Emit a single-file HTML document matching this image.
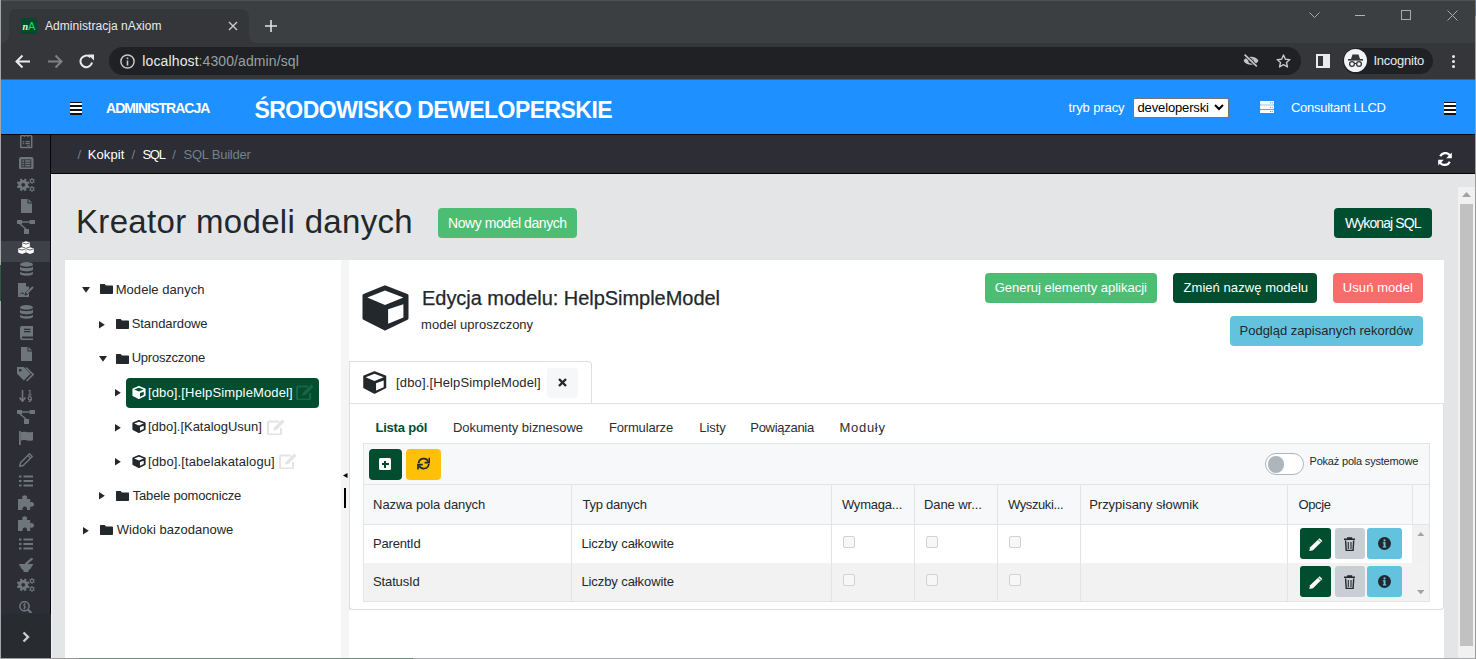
<!DOCTYPE html>
<html><head><meta charset="utf-8"><style>
*{margin:0;padding:0;box-sizing:border-box}
html,body{width:1476px;height:659px;overflow:hidden;background:#e4e5e6;font-family:"Liberation Sans",sans-serif}
body>div,body>svg{position:absolute}
.t{position:absolute;white-space:nowrap}
</style></head><body>
<div style="left:0px;top:0px;width:1476px;height:43px;background:#3c3f42;"></div>
<div style="left:0px;top:0px;width:1476px;height:1px;background:#4f5153;"></div>
<div style="left:9px;top:9px;width:239.5px;height:34px;background:#35363a;border-radius:8px 8px 0 0"></div>
<div style="left:1px;top:35px;width:8px;height:8px;background:#35363a;"></div>
<div style="left:1px;top:27px;width:8px;height:16px;background:#3c3f42;border-radius:0 0 8px 0"></div>
<div style="left:248.5px;top:35px;width:8px;height:8px;background:#35363a;"></div>
<div style="left:248.5px;top:27px;width:8px;height:16px;background:#3c3f42;border-radius:0 0 0 8px"></div>
<div style="left:21px;top:18px;width:16px;height:16px;background:#05492d;border-radius:2px"></div>
<div class="t" style="left:22.5px;top:18px;font:italic bold 10px/17px 'Liberation Serif',serif;color:#f0f0f0;letter-spacing:-0.8px">n</div>
<div class="t" style="left:28px;top:17.5px;font:normal 11px/17px 'Liberation Sans',sans-serif;color:#1fdc6a">A</div>
<div class="t" style="left:45.00px;top:19px;font-size:12px;line-height:14px;color:#e8eaed;font-weight:400;letter-spacing:0.053px;">Administracja nAxiom</div>
<svg style="position:absolute;left:228px;top:21px;" width="10" height="10" viewBox="0 0 10 10"><path d="M1 1L9 9M9 1L1 9" stroke="#c9cbcf" stroke-width="1.4"/></svg>
<svg style="position:absolute;left:265px;top:20px;" width="12" height="12" viewBox="0 0 12 12"><path d="M6 0V12M0 6H12" stroke="#e0e2e5" stroke-width="1.6"/></svg>
<svg style="position:absolute;left:1309px;top:12px;" width="11" height="7" viewBox="0 0 11 7"><path d="M0.5 0.5L5.5 5.5L10.5 0.5" stroke="#a9abad" fill="none" stroke-width="1"/></svg>
<div style="left:1355px;top:15px;width:10px;height:1px;background:#b0b2b4;"></div>
<div style="left:1401px;top:10px;width:10px;height:10px;background:transparent;border:1px solid #a9abad"></div>
<svg style="position:absolute;left:1447px;top:10px;" width="11" height="11" viewBox="0 0 11 11"><path d="M0.5 0.5L10.5 10.5M10.5 0.5L0.5 10.5" stroke="#a9abad" stroke-width="1"/></svg>
<div style="left:0px;top:43px;width:1476px;height:36px;background:#35363a;"></div>
<svg style="position:absolute;left:15px;top:54px;" width="16" height="15" viewBox="0 0 16 15"><path d="M15 7.5H2M7.5 1.5L1.5 7.5L7.5 13.5" stroke="#e8eaed" stroke-width="2" fill="none"/></svg>
<svg style="position:absolute;left:47px;top:54px;" width="16" height="15" viewBox="0 0 16 15"><path d="M1 7.5H14M8.5 1.5L14.5 7.5L8.5 13.5" stroke="#7f8184" stroke-width="2" fill="none"/></svg>
<svg style="position:absolute;left:79px;top:54px;" width="16" height="15" viewBox="0 0 16 15"><path d="M13 8.5A5.8 5.8 0 1 1 11.3 3.2" stroke="#e8eaed" stroke-width="2" fill="none"/><path d="M9 0.5H15V6.5Z" fill="#e8eaed"/></svg>
<div style="left:109px;top:47px;width:1192px;height:28px;background:#202124;border-radius:14px"></div>
<svg style="position:absolute;left:120px;top:54px;" width="15" height="15" viewBox="0 0 15 15"><circle cx="7.5" cy="7.5" r="6.6" stroke="#c5c7ca" stroke-width="1.5" fill="none"/><rect x="6.7" y="6.5" width="1.6" height="5" fill="#c5c7ca"/><rect x="6.7" y="3.5" width="1.6" height="1.7" fill="#c5c7ca"/></svg>
<div class="t" style="left:142.30px;top:53px;font-size:14px;line-height:16px;color:#e8eaed;font-weight:400;letter-spacing:0.125px;">localhost</div>
<div class="t" style="left:198.50px;top:53px;font-size:14px;line-height:16px;color:#9aa0a6;font-weight:400;letter-spacing:0.107px;">:4300/admin/sql</div>
<svg style="position:absolute;left:1243px;top:54px;" width="16" height="13" viewBox="0 0 16 13"><path d="M0.6 6.8C2.8 1.4 13.2 1.4 15.4 6.8C13.2 12.2 2.8 12.2 0.6 6.8Z" fill="#c4c7c5"/><circle cx="8" cy="6.8" r="2.6" fill="#202124"/><circle cx="8.6" cy="6.2" r="1.6" fill="#c4c7c5"/><path d="M1.6 0.6L13.8 12.4" stroke="#202124" stroke-width="3.2"/><path d="M1.6 0.6L13.8 12.4" stroke="#c4c7c5" stroke-width="1.7"/></svg>
<svg style="position:absolute;left:1276px;top:54px;" width="15" height="14" viewBox="0 0 15 14"><path d="M7.5 1L9.4 5.2L13.9 5.6L10.5 8.6L11.5 13L7.5 10.7L3.5 13L4.5 8.6L1.1 5.6L5.6 5.2Z" stroke="#c5c7ca" stroke-width="1.4" fill="none" stroke-linejoin="round"/></svg>
<div style="left:1316px;top:54px;width:14px;height:14px;background:transparent;border:2px solid #e8eaed"></div>
<div style="left:1323px;top:54px;width:7px;height:14px;background:#e8eaed;"></div>
<div style="left:1343px;top:48px;width:90px;height:26px;background:#202124;border-radius:13px"></div>
<div style="left:1344px;top:49px;width:23px;height:23px;border-radius:50%;background:#f1f3f4"></div>
<svg style="position:absolute;left:1347px;top:53px;" width="17" height="15" viewBox="0 0 17 15"><path d="M4 6L5.5 1.5H11.5L13 6Z" fill="#35363a"/><rect x="1" y="6" width="15" height="1.6" fill="#35363a"/><circle cx="5" cy="11" r="2.4" stroke="#35363a" stroke-width="1.3" fill="none"/><circle cx="12" cy="11" r="2.4" stroke="#35363a" stroke-width="1.3" fill="none"/><path d="M7.4 10.5H9.6" stroke="#35363a" stroke-width="1.2"/></svg>
<div class="t" style="left:1373.50px;top:53px;font-size:13px;line-height:15px;color:#e8eaed;font-weight:400;letter-spacing:-0.250px;">Incognito</div>
<div style="left:1451.5px;top:55.0px;width:3.4px;height:3.4px;border-radius:50%;background:#e8eaed"></div>
<div style="left:1451.5px;top:60.0px;width:3.4px;height:3.4px;border-radius:50%;background:#e8eaed"></div>
<div style="left:1451.5px;top:65.0px;width:3.4px;height:3.4px;border-radius:50%;background:#e8eaed"></div>
<div style="left:0px;top:79px;width:1476px;height:1px;background:#5c5855;"></div>
<div style="left:0px;top:80px;width:1476px;height:54px;background:#1e90ff;"></div>
<div style="left:70px;top:102px;width:12px;height:13px;background:#111;"></div>
<div style="left:70px;top:103px;width:12px;height:2px;background:#fff;"></div>
<div style="left:70px;top:107px;width:12px;height:2px;background:#fff;"></div>
<div style="left:70px;top:111px;width:12px;height:2px;background:#fff;"></div>
<div class="t" style="left:106.00px;top:100px;font-size:14px;line-height:16px;color:#fff;font-weight:700;letter-spacing:-0.958px;">ADMINISTRACJA</div>
<div class="t" style="left:254.50px;top:97px;font-size:23px;line-height:26px;color:#fff;font-weight:700;letter-spacing:-0.543px;">ŚRODOWISKO DEWELOPERSKIE</div>
<div class="t" style="left:1068.50px;top:100px;font-size:13px;line-height:15px;color:#fff;font-weight:400;letter-spacing:-0.111px;">tryb pracy</div>
<div style="left:1133px;top:98px;width:96px;height:20px;background:#fff;border:1px solid #767676;border-radius:2px"></div>
<div class="t" style="left:1137.50px;top:100px;font-size:13px;line-height:15px;color:#000;font-weight:400;letter-spacing:-0.136px;">developerski</div>
<svg style="position:absolute;left:1214px;top:104px;" width="10" height="7" viewBox="0 0 10 7"><path d="M1 1L5 5L9 1" stroke="#000" stroke-width="2" fill="none"/></svg>
<svg style="position:absolute;left:1260px;top:101px;" width="14" height="12.4" viewBox="0 0 14 12.4"><rect x="0" y="0" width="14" height="3.7" rx="0.8" fill="#fff"/><rect x="0" y="4.35" width="14" height="3.7" rx="0.8" fill="#fff"/><rect x="0" y="8.7" width="14" height="3.7" rx="0.8" fill="#fff"/><circle cx="10.4" cy="1.85" r="0.55" fill="#1e90ff"/><circle cx="12.2" cy="1.85" r="0.55" fill="#1e90ff"/><circle cx="10.4" cy="6.2" r="0.55" fill="#1e90ff"/><circle cx="12.2" cy="6.2" r="0.55" fill="#1e90ff"/><circle cx="10.4" cy="10.55" r="0.55" fill="#1e90ff"/><circle cx="12.2" cy="10.55" r="0.55" fill="#1e90ff"/></svg>
<div class="t" style="left:1291.00px;top:100px;font-size:13px;line-height:15px;color:#fff;font-weight:400;letter-spacing:-0.286px;">Consultant LLCD</div>
<div style="left:1444px;top:102px;width:12px;height:13px;background:#111;"></div>
<div style="left:1444px;top:103px;width:12px;height:2px;background:#fff;"></div>
<div style="left:1444px;top:107px;width:12px;height:2px;background:#fff;"></div>
<div style="left:1444px;top:111px;width:12px;height:2px;background:#fff;"></div>
<div style="left:0px;top:134px;width:1476px;height:1px;background:#050507;"></div>
<div style="left:1px;top:135px;width:49px;height:479px;background:#2c2d35;"></div>
<div style="left:1px;top:614px;width:50px;height:45px;background:#282b30;"></div>
<div style="left:50px;top:135px;width:1px;height:479px;background:#050507;"></div>
<div style="left:1px;top:241px;width:49px;height:21px;background:#3e4248;"></div>
<svg style="position:absolute;left:20px;top:135px;" width="12.5" height="14" viewBox="0 0 12.5 14"><path d="M0.8 1.2L2.6 0.2L4.5 1.2L6.25 0.2L8 1.2L9.9 0.2L11.7 1.2V12.6H0.8Z" stroke="#6f757d" stroke-width="1.5" fill="none" stroke-linejoin="round"/><path d="M2.8 6.6H4.2M5.4 6.6H9.8M2.8 8.6H4.2M5.4 8.6H9.8M7.2 10.8H9.8" stroke="#6f757d" stroke-width="1.2"/></svg>
<svg style="position:absolute;left:19px;top:156.5px;" width="14.5" height="12.6" viewBox="0 0 14.5 12.6"><rect x="1.1" y="1.1" width="12.3" height="10.4" rx="1" stroke="#6f757d" stroke-width="2.2" fill="#383b42"/><path d="M3.4 4H4.9M3.4 6.3H4.9M3.4 8.6H4.9M6.2 4H11.2M6.2 6.3H11.2M6.2 8.6H11.2" stroke="#6f757d" stroke-width="1.3"/></svg>
<svg style="position:absolute;left:17px;top:177.5px;overflow:visible" width="18.5" height="15" viewBox="0 0 18.5 15"><path d="M11.10 6.80L11.03 7.60L12.53 8.27L11.72 10.24L10.19 9.65L9.66 10.26L9.05 10.79L9.64 12.32L7.67 13.13L7.00 11.63L6.20 11.70L5.40 11.63L4.73 13.13L2.76 12.32L3.35 10.79L2.74 10.26L2.21 9.65L0.68 10.24L-0.13 8.27L1.37 7.60L1.30 6.80L1.37 6.00L-0.13 5.33L0.68 3.36L2.21 3.95L2.74 3.34L3.35 2.81L2.76 1.28L4.73 0.47L5.40 1.97L6.20 1.90L7.00 1.97L7.67 0.47L9.64 1.28L9.05 2.81L9.66 3.34L10.19 3.95L11.72 3.36L12.53 5.33L11.03 6.00Z" fill="#6f757d"/><circle cx="6.2" cy="6.8" r="1.9" fill="#2c2d35"/><path d="M17.10 2.90L17.06 3.33L17.78 3.72L17.10 4.90L16.40 4.47L16.05 4.72L15.66 4.89L15.68 5.72L14.32 5.72L14.34 4.89L13.95 4.72L13.60 4.47L12.90 4.90L12.22 3.72L12.94 3.33L12.90 2.90L12.94 2.47L12.22 2.08L12.90 0.90L13.60 1.33L13.95 1.08L14.34 0.91L14.32 0.08L15.68 0.08L15.66 0.91L16.05 1.08L16.40 1.33L17.10 0.90L17.78 2.08L17.06 2.47Z" fill="#6f757d"/><circle cx="15" cy="2.9" r="1.1" fill="#2c2d35"/><path d="M17.10 10.90L17.06 11.33L17.78 11.72L17.10 12.90L16.40 12.47L16.05 12.72L15.66 12.89L15.68 13.72L14.32 13.72L14.34 12.89L13.95 12.72L13.60 12.47L12.90 12.90L12.22 11.72L12.94 11.33L12.90 10.90L12.94 10.47L12.22 10.08L12.90 8.90L13.60 9.33L13.95 9.08L14.34 8.91L14.32 8.08L15.68 8.08L15.66 8.91L16.05 9.08L16.40 9.33L17.10 8.90L17.78 10.08L17.06 10.47Z" fill="#6f757d"/><circle cx="15" cy="10.9" r="1.1" fill="#2c2d35"/></svg>
<svg style="position:absolute;left:17px;top:577.5px;overflow:visible" width="18.5" height="15" viewBox="0 0 18.5 15"><path d="M11.10 6.80L11.03 7.60L12.53 8.27L11.72 10.24L10.19 9.65L9.66 10.26L9.05 10.79L9.64 12.32L7.67 13.13L7.00 11.63L6.20 11.70L5.40 11.63L4.73 13.13L2.76 12.32L3.35 10.79L2.74 10.26L2.21 9.65L0.68 10.24L-0.13 8.27L1.37 7.60L1.30 6.80L1.37 6.00L-0.13 5.33L0.68 3.36L2.21 3.95L2.74 3.34L3.35 2.81L2.76 1.28L4.73 0.47L5.40 1.97L6.20 1.90L7.00 1.97L7.67 0.47L9.64 1.28L9.05 2.81L9.66 3.34L10.19 3.95L11.72 3.36L12.53 5.33L11.03 6.00Z" fill="#6f757d"/><circle cx="6.2" cy="6.8" r="1.9" fill="#2c2d35"/><path d="M17.10 2.90L17.06 3.33L17.78 3.72L17.10 4.90L16.40 4.47L16.05 4.72L15.66 4.89L15.68 5.72L14.32 5.72L14.34 4.89L13.95 4.72L13.60 4.47L12.90 4.90L12.22 3.72L12.94 3.33L12.90 2.90L12.94 2.47L12.22 2.08L12.90 0.90L13.60 1.33L13.95 1.08L14.34 0.91L14.32 0.08L15.68 0.08L15.66 0.91L16.05 1.08L16.40 1.33L17.10 0.90L17.78 2.08L17.06 2.47Z" fill="#6f757d"/><circle cx="15" cy="2.9" r="1.1" fill="#2c2d35"/><path d="M17.10 10.90L17.06 11.33L17.78 11.72L17.10 12.90L16.40 12.47L16.05 12.72L15.66 12.89L15.68 13.72L14.32 13.72L14.34 12.89L13.95 12.72L13.60 12.47L12.90 12.90L12.22 11.72L12.94 11.33L12.90 10.90L12.94 10.47L12.22 10.08L12.90 8.90L13.60 9.33L13.95 9.08L14.34 8.91L14.32 8.08L15.68 8.08L15.66 8.91L16.05 9.08L16.40 9.33L17.10 8.90L17.78 10.08L17.06 10.47Z" fill="#6f757d"/><circle cx="15" cy="10.9" r="1.1" fill="#2c2d35"/></svg>
<svg style="position:absolute;left:21px;top:199px;" width="11" height="14" viewBox="0 0 11 14"><path d="M0 0H6.5V4.5H11V14H0Z" fill="#6f757d"/><path d="M7.5 0L11 3.5H7.5Z" fill="#6f757d"/></svg>
<svg style="position:absolute;left:21px;top:347px;" width="11" height="14" viewBox="0 0 11 14"><path d="M0 0H6.5V4.5H11V14H0Z" fill="#6f757d"/><path d="M7.5 0L11 3.5H7.5Z" fill="#6f757d"/></svg>
<svg style="position:absolute;left:17px;top:220px;" width="18" height="14" viewBox="0 0 18 14"><rect x="0" y="0" width="5" height="4" fill="#6f757d"/><rect x="12.5" y="0" width="5.5" height="4" fill="#6f757d"/><rect x="7" y="9" width="5" height="5" fill="#6f757d"/><path d="M5 2H12.5M3 4L9 9" stroke="#6f757d" stroke-width="1.5"/></svg>
<svg style="position:absolute;left:17px;top:410px;" width="18" height="14" viewBox="0 0 18 14"><rect x="0" y="0" width="5" height="4" fill="#6f757d"/><rect x="12.5" y="0" width="5.5" height="4" fill="#6f757d"/><rect x="7" y="9" width="5" height="5" fill="#6f757d"/><path d="M5 2H12.5M3 4L9 9" stroke="#6f757d" stroke-width="1.5"/></svg>
<svg style="position:absolute;left:18px;top:241px;" width="16" height="13" viewBox="0 0 16 13"><path d="M8 0.2L11.8 1.6V5.6L8 7L4.2 5.6V1.6Z" fill="#fff"/><path d="M4 6.2L7.8 7.6V11.6L4 13L0.2 11.6V7.6Z" fill="#fff"/><path d="M12 6.2L15.8 7.6V11.6L12 13L8.2 11.6V7.6Z" fill="#fff"/><path d="M4.8 2L8 3.1L11.2 2M0.8 8L4 9.1L7.2 8M8.8 8L12 9.1L15.2 8" stroke="#3e4248" stroke-width="0.8" fill="none"/></svg>
<svg style="position:absolute;left:20px;top:262px;" width="13" height="14" viewBox="0 0 13 14"><ellipse cx="6.5" cy="2.4" rx="6.5" ry="2.4" fill="#6f757d"/><path d="M0 4.3C0 6.8 13 6.8 13 4.3V7.6C13 10 0 10 0 7.6Z" fill="#6f757d"/><path d="M0 9.4C0 11.8 13 11.8 13 9.4V11.6C13 14.6 0 14.6 0 11.6Z" fill="#6f757d"/></svg>
<svg style="position:absolute;left:20px;top:305px;" width="13" height="14" viewBox="0 0 13 14"><ellipse cx="6.5" cy="2.4" rx="6.5" ry="2.4" fill="#6f757d"/><path d="M0 4.3C0 6.8 13 6.8 13 4.3V7.6C13 10 0 10 0 7.6Z" fill="#6f757d"/><path d="M0 9.4C0 11.8 13 11.8 13 9.4V11.6C13 14.6 0 14.6 0 11.6Z" fill="#6f757d"/></svg>
<svg style="position:absolute;left:18px;top:283px;" width="16" height="14" viewBox="0 0 16 14"><path d="M0 0H8V3.5H11V6L7 10L6.5 12.5L9 12L11 10V14H0Z" fill="#6f757d"/><path d="M8.5 10.5L15 4" stroke="#6f757d" stroke-width="2"/><path d="M2 11.5L4 9.5L5 11L6 10" stroke="#2c2d35" stroke-width="0.9" fill="none"/></svg>
<svg style="position:absolute;left:20px;top:326px;" width="13" height="14" viewBox="0 0 13 14"><path d="M2 0H13V10.5H2.5C1.7 10.5 1.5 12.5 2.5 12.5H13V14H2C0.8 14 0 13 0 11.8V2C0 0.8 0.8 0 2 0Z" fill="#6f757d"/><path d="M4 3.3H10.5M4 5.6H10.5" stroke="#2c2d35" stroke-width="1.2"/></svg>
<svg style="position:absolute;left:17px;top:367px;" width="18" height="15" viewBox="0 0 18 15"><path d="M0 0H6.8L13.6 6.8L6.8 13.6L0 6.8Z" fill="#6f757d"/><circle cx="3.2" cy="3.2" r="1.3" fill="#2c2d35"/><path d="M9 0.6L16.2 7.4L9.6 14" stroke="#6f757d" stroke-width="1.6" fill="none"/></svg>
<svg style="position:absolute;left:19px;top:390px;" width="14" height="12" viewBox="0 0 14 12"><path d="M3.5 0V10M0.5 7.5L3.5 11.2L6.5 7.5" stroke="#6f757d" stroke-width="1.6" fill="none"/><path d="M9.5 0.5H11V5M9 5H12.5" stroke="#6f757d" stroke-width="1.2" fill="none"/><circle cx="10.8" cy="8.2" r="1.6" stroke="#6f757d" stroke-width="1.2" fill="none"/><path d="M12.4 8.2C12.4 10.5 11.2 11.6 9.5 11.8" stroke="#6f757d" stroke-width="1.2" fill="none"/></svg>
<svg style="position:absolute;left:19px;top:431px;" width="15" height="14" viewBox="0 0 15 14"><rect x="0" y="0" width="1.8" height="14" fill="#6f757d"/><path d="M2 1.2C6 -0.6 9 2.6 14 0.8V9.2C9 11 6 7.8 2 9.6Z" fill="#6f757d"/></svg>
<svg style="position:absolute;left:19px;top:453px;" width="14" height="14" viewBox="0 0 14 14"><path d="M10.5 0.8L13.2 3.5L4.2 12.5L0.8 13.2L1.5 9.8Z" stroke="#6f757d" stroke-width="1.5" fill="none" stroke-linejoin="round"/><path d="M9 2.5L11.5 5" stroke="#6f757d" stroke-width="1.2"/></svg>
<svg style="position:absolute;left:19px;top:475px;" width="14" height="12" viewBox="0 0 14 12"><path d="M0 1.5H2.5M0 6H2.5M0 10.5H2.5M4.5 1.5H14M4.5 6H14M4.5 10.5H14" stroke="#6f757d" stroke-width="2.2"/></svg>
<svg style="position:absolute;left:19px;top:538px;" width="14" height="12" viewBox="0 0 14 12"><path d="M0 1.5H2.5M0 6H2.5M0 10.5H2.5M4.5 1.5H14M4.5 6H14M4.5 10.5H14" stroke="#6f757d" stroke-width="2.2"/></svg>
<svg style="position:absolute;left:18px;top:495px;" width="16" height="15" viewBox="0 0 16 15"><path d="M0 4H4.5C4 3 4 1.5 5 0.8C6 0 7.6 0 8.4 0.8C9.4 1.6 9.4 3 8.8 4H12.2V7.4C13.2 6.8 14.6 6.8 15.4 7.8C16.2 8.6 16.2 10.2 15.4 11C14.6 12 13.2 12 12.2 11.4V15H8.8C9.4 14 9 12 7.2 11.6C5.6 11.4 4.2 12.6 4.6 15H0Z" fill="#6f757d"/></svg>
<svg style="position:absolute;left:18px;top:516px;" width="16" height="15" viewBox="0 0 16 15"><path d="M0 4H4.5C4 3 4 1.5 5 0.8C6 0 7.6 0 8.4 0.8C9.4 1.6 9.4 3 8.8 4H12.2V7.4C13.2 6.8 14.6 6.8 15.4 7.8C16.2 8.6 16.2 10.2 15.4 11C14.6 12 13.2 12 12.2 11.4V15H8.8C9.4 14 9 12 7.2 11.6C5.6 11.4 4.2 12.6 4.6 15H0Z" fill="#6f757d"/></svg>
<svg style="position:absolute;left:19px;top:558px;" width="14" height="14" viewBox="0 0 14 14"><path d="M0 6H14V7.5H13C12.6 10 11 11.6 9.5 12.2V14H4.5V12.2C3 11.6 1.4 10 1 7.5H0Z" fill="#6f757d"/><path d="M7 5.8L12.8 0.8" stroke="#6f757d" stroke-width="2.2" stroke-linecap="round"/></svg>
<svg style="position:absolute;left:19px;top:601px;" width="14" height="12" viewBox="0 0 14 12"><circle cx="5.5" cy="5.3" r="4.6" stroke="#6f757d" stroke-width="1.6" fill="none"/><path d="M8.8 8.6L12.5 12" stroke="#6f757d" stroke-width="2.2"/><path d="M6.8 3.6C6.4 3.1 4.4 2.9 4.4 4.3C4.4 5.6 6.8 5 6.8 6.3C6.8 7.6 4.7 7.5 4.2 7M5.5 2.3V8.3" stroke="#6f757d" stroke-width="0.9" fill="none"/></svg>
<svg style="position:absolute;left:22px;top:631px;" width="8" height="12" viewBox="0 0 8 12"><path d="M1.5 1.5L6 6L1.5 10.5" stroke="#c8ccd0" stroke-width="2.4" fill="none"/></svg>
<div style="left:51px;top:135px;width:1425px;height:38px;background:#2c2d35;"></div>
<div style="left:51px;top:173px;width:1425px;height:1px;background:#050507;"></div>
<div style="left:51px;top:174px;width:1px;height:485px;background:#f0f1f2;"></div>
<div class="t" style="left:77.50px;top:147px;font-size:13px;line-height:15px;color:#73818f;font-weight:400;letter-spacing:0.000px;">/</div>
<div class="t" style="left:87.70px;top:147px;font-size:13px;line-height:15px;color:#fff;font-weight:400;letter-spacing:0.120px;">Kokpit</div>
<div class="t" style="left:131.50px;top:147px;font-size:13px;line-height:15px;color:#73818f;font-weight:400;letter-spacing:0.000px;">/</div>
<div class="t" style="left:142.40px;top:147px;font-size:13px;line-height:15px;color:#fff;font-weight:400;letter-spacing:-1.250px;">SQL</div>
<div class="t" style="left:172.30px;top:147px;font-size:13px;line-height:15px;color:#73818f;font-weight:400;letter-spacing:0.000px;">/</div>
<div class="t" style="left:183.50px;top:147px;font-size:13px;line-height:15px;color:#73818f;font-weight:400;letter-spacing:-0.230px;">SQL Builder</div>
<svg style="position:absolute;left:1438px;top:152px;" width="15" height="14" viewBox="0 0 15 14"><path d="M12.6 5A5.6 5.6 0 0 0 2.2 4.2" stroke="#fff" stroke-width="2.2" fill="none"/><path d="M13.8 0.5V6.2H8.2Z" fill="#fff"/><path d="M1.4 9A5.6 5.6 0 0 0 11.8 9.8" stroke="#fff" stroke-width="2.2" fill="none"/><path d="M0.2 13.5V7.8H5.8Z" fill="#fff"/></svg>
<div class="t" style="left:76.00px;top:203px;font-size:33px;line-height:37px;color:#23282c;font-weight:400;letter-spacing:0.325px;">Kreator modeli danych</div>
<div style="left:438px;top:208px;width:139px;height:30px;background:#4dbd74;border-radius:4px;"></div>
<div class="t" style="left:448.00px;top:215px;font-size:14px;line-height:16px;color:#fff;font-weight:400;letter-spacing:-0.438px;">Nowy model danych</div>
<div style="left:1334px;top:208px;width:98px;height:30px;background:#014d2f;border-radius:4px;"></div>
<div class="t" style="left:1345.00px;top:215px;font-size:14px;line-height:16px;color:#fff;font-weight:400;letter-spacing:-0.900px;">Wykonaj SQL</div>
<div style="left:65px;top:260px;width:276px;height:399px;background:#fff;"></div>
<div style="left:341px;top:260px;width:8px;height:399px;background:#f5f5f5;"></div>
<div style="left:349px;top:260px;width:1095px;height:399px;background:#fff;"></div>
<svg style="position:absolute;left:343px;top:473px;" width="5" height="5" viewBox="0 0 5 5"><path d="M4.5 0V5L0 2.5Z" fill="#000"/></svg>
<div style="left:344px;top:488px;width:2px;height:20px;background:#000;"></div>
<div style="left:1458px;top:187px;width:17px;height:472px;background:#f1f1f1;"></div>
<div style="left:1460px;top:204px;width:13px;height:442px;background:#c1c1c1;"></div>
<svg style="position:absolute;left:1461px;top:191px;" width="11" height="7" viewBox="0 0 11 7"><path d="M1 6H10L5.5 1Z" fill="#a3a3a3"/></svg>
<svg style="position:absolute;left:82px;top:287px;" width="8" height="6" viewBox="0 0 8 6"><path d="M0 0H8L4 5.7Z" fill="#23282c"/></svg>
<svg style="position:absolute;left:100px;top:284px;" width="13" height="10" viewBox="0 0 13 10"><path d="M0 1C0 0.4 0.4 0 1 0H4.6L6 1.6H12C12.6 1.6 13 2 13 2.6V9C13 9.6 12.6 10 12 10H1C0.4 10 0 9.6 0 9Z" fill="#23282c"/></svg>
<div class="t" style="left:115.70px;top:282px;font-size:13px;line-height:15px;color:#23282c;font-weight:400;letter-spacing:0.050px;">Modele danych</div>
<svg style="position:absolute;left:99px;top:320.5px;" width="6" height="8" viewBox="0 0 6 8"><path d="M0 0V7.6L5.8 3.8Z" fill="#23282c"/></svg>
<svg style="position:absolute;left:116px;top:319px;" width="13" height="10" viewBox="0 0 13 10"><path d="M0 1C0 0.4 0.4 0 1 0H4.6L6 1.6H12C12.6 1.6 13 2 13 2.6V9C13 9.6 12.6 10 12 10H1C0.4 10 0 9.6 0 9Z" fill="#23282c"/></svg>
<div class="t" style="left:131.70px;top:316px;font-size:13px;line-height:15px;color:#23282c;font-weight:400;letter-spacing:-0.070px;">Standardowe</div>
<svg style="position:absolute;left:98.5px;top:355.5px;" width="8" height="6" viewBox="0 0 8 6"><path d="M0 0H8L4 5.7Z" fill="#23282c"/></svg>
<svg style="position:absolute;left:116px;top:353.5px;" width="13" height="10" viewBox="0 0 13 10"><path d="M0 1C0 0.4 0.4 0 1 0H4.6L6 1.6H12C12.6 1.6 13 2 13 2.6V9C13 9.6 12.6 10 12 10H1C0.4 10 0 9.6 0 9Z" fill="#23282c"/></svg>
<div class="t" style="left:131.70px;top:350px;font-size:13px;line-height:15px;color:#23282c;font-weight:400;letter-spacing:-0.240px;">Uproszczone</div>
<div style="left:126px;top:378px;width:193px;height:30px;background:#014d2f;border-radius:4px"></div>
<svg style="position:absolute;left:115px;top:389px;" width="6" height="8" viewBox="0 0 6 8"><path d="M0 0V7.6L5.8 3.8Z" fill="#23282c"/></svg>
<svg style="position:absolute;left:131.6px;top:385.7px;overflow:visible" width="14" height="13" viewBox="0 0 47 46"><path d="M23 2.2L44.8 10.6V33.2L23 43.8L2.2 33.2V10.6Z" fill="#fff" stroke="#fff" stroke-width="4" stroke-linejoin="round"/><path d="M6.5 12.4L23 6.4L40.2 12.4L23 19.2Z" fill="#014d2f"/><path d="M27 25L40.2 20.5V32L27 37.8Z" fill="#014d2f"/></svg>
<div class="t" style="left:148.00px;top:385px;font-size:13px;line-height:15px;color:#fff;font-weight:400;letter-spacing:0.141px;">[dbo].[HelpSimpleModel]</div>
<svg style="position:absolute;left:296px;top:384px;" width="18" height="16" viewBox="0 0 18 16"><path d="M12 2.5H2.2C1.5 2.5 1 3 1 3.7V14.3C1 15 1.5 15.5 2.2 15.5H12.8C13.5 15.5 14 15 14 14.3V9" stroke="#1d6446" stroke-width="2" fill="none"/><path d="M15.2 0.4L17.6 2.8L9.6 10.8L6 11.8L7 8.4Z" fill="#1d6446"/></svg>
<svg style="position:absolute;left:115px;top:423.5px;" width="6" height="8" viewBox="0 0 6 8"><path d="M0 0V7.6L5.8 3.8Z" fill="#23282c"/></svg>
<svg style="position:absolute;left:131.6px;top:420px;overflow:visible" width="14" height="13" viewBox="0 0 47 46"><path d="M23 2.2L44.8 10.6V33.2L23 43.8L2.2 33.2V10.6Z" fill="#23282c" stroke="#23282c" stroke-width="4" stroke-linejoin="round"/><path d="M6.5 12.4L23 6.4L40.2 12.4L23 19.2Z" fill="#fff"/><path d="M27 25L40.2 20.5V32L27 37.8Z" fill="#fff"/></svg>
<div class="t" style="left:148.00px;top:419px;font-size:13px;line-height:15px;color:#23282c;font-weight:400;letter-spacing:-0.022px;">[dbo].[KatalogUsun]</div>
<svg style="position:absolute;left:266.5px;top:418.5px;" width="18" height="16" viewBox="0 0 18 16"><path d="M12 2.5H2.2C1.5 2.5 1 3 1 3.7V14.3C1 15 1.5 15.5 2.2 15.5H12.8C13.5 15.5 14 15 14 14.3V9" stroke="#e4e4e4" stroke-width="2" fill="none"/><path d="M15.2 0.4L17.6 2.8L9.6 10.8L6 11.8L7 8.4Z" fill="#e4e4e4"/></svg>
<svg style="position:absolute;left:115px;top:458px;" width="6" height="8" viewBox="0 0 6 8"><path d="M0 0V7.6L5.8 3.8Z" fill="#23282c"/></svg>
<svg style="position:absolute;left:131.6px;top:454.5px;overflow:visible" width="14" height="13" viewBox="0 0 47 46"><path d="M23 2.2L44.8 10.6V33.2L23 43.8L2.2 33.2V10.6Z" fill="#23282c" stroke="#23282c" stroke-width="4" stroke-linejoin="round"/><path d="M6.5 12.4L23 6.4L40.2 12.4L23 19.2Z" fill="#fff"/><path d="M27 25L40.2 20.5V32L27 37.8Z" fill="#fff"/></svg>
<div class="t" style="left:148.00px;top:454px;font-size:13px;line-height:15px;color:#23282c;font-weight:400;letter-spacing:0.114px;">[dbo].[tabelakatalogu]</div>
<svg style="position:absolute;left:278.6px;top:453px;" width="18" height="16" viewBox="0 0 18 16"><path d="M12 2.5H2.2C1.5 2.5 1 3 1 3.7V14.3C1 15 1.5 15.5 2.2 15.5H12.8C13.5 15.5 14 15 14 14.3V9" stroke="#e4e4e4" stroke-width="2" fill="none"/><path d="M15.2 0.4L17.6 2.8L9.6 10.8L6 11.8L7 8.4Z" fill="#e4e4e4"/></svg>
<svg style="position:absolute;left:99px;top:492px;" width="6" height="8" viewBox="0 0 6 8"><path d="M0 0V7.6L5.8 3.8Z" fill="#23282c"/></svg>
<svg style="position:absolute;left:116px;top:490.5px;" width="13" height="10" viewBox="0 0 13 10"><path d="M0 1C0 0.4 0.4 0 1 0H4.6L6 1.6H12C12.6 1.6 13 2 13 2.6V9C13 9.6 12.6 10 12 10H1C0.4 10 0 9.6 0 9Z" fill="#23282c"/></svg>
<div class="t" style="left:132.70px;top:488px;font-size:13px;line-height:15px;color:#23282c;font-weight:400;letter-spacing:-0.169px;">Tabele pomocnicze</div>
<svg style="position:absolute;left:83px;top:526.5px;" width="6" height="8" viewBox="0 0 6 8"><path d="M0 0V7.6L5.8 3.8Z" fill="#23282c"/></svg>
<svg style="position:absolute;left:100px;top:525px;" width="13" height="10" viewBox="0 0 13 10"><path d="M0 1C0 0.4 0.4 0 1 0H4.6L6 1.6H12C12.6 1.6 13 2 13 2.6V9C13 9.6 12.6 10 12 10H1C0.4 10 0 9.6 0 9Z" fill="#23282c"/></svg>
<div class="t" style="left:116.70px;top:522px;font-size:13px;line-height:15px;color:#23282c;font-weight:400;letter-spacing:0.019px;">Widoki bazodanowe</div>
<svg style="position:absolute;left:362px;top:285px;" width="47" height="46.0" viewBox="0 0 47 46"><path d="M23 2.2L44.8 10.6V33.2L23 43.8L2.2 33.2V10.6Z" fill="#23282c" stroke="#23282c" stroke-width="3.4" stroke-linejoin="round"/><path d="M5.3 12.4L23 5.6L41.4 12.4L23 20Z" fill="#fff"/><path d="M26.1 24.3L41.4 19.2V32.4L26.1 38.8Z" fill="#fff"/></svg>
<div class="t" style="left:422.00px;top:287px;font-size:20px;line-height:22px;color:#23282c;font-weight:400;letter-spacing:-0.034px;-webkit-text-stroke:0.25px #23282c">Edycja modelu: HelpSimpleModel</div>
<div class="t" style="left:421.10px;top:317px;font-size:13px;line-height:15px;color:#23282c;font-weight:400;letter-spacing:0.000px;">model uproszczony</div>
<div style="left:985.2px;top:273.2px;width:171.79999999999995px;height:29.5px;background:#4dbd74;border-radius:4px"></div>
<div class="t" style="left:994.70px;top:280px;font-size:13px;line-height:15px;color:#fff;font-weight:400;letter-spacing:-0.008px;">Generuj elementy aplikacji</div>
<div style="left:1173px;top:273.2px;width:144px;height:29.5px;background:#014d2f;border-radius:4px"></div>
<div class="t" style="left:1183.50px;top:280px;font-size:13px;line-height:15px;color:#fff;font-weight:400;letter-spacing:0.059px;">Zmień nazwę modelu</div>
<div style="left:1333.3px;top:273.2px;width:89.70000000000005px;height:29.5px;background:#f86c6b;border-radius:4px"></div>
<div class="t" style="left:1342.80px;top:280px;font-size:13px;line-height:15px;color:#fff;font-weight:400;letter-spacing:0.078px;">Usuń model</div>
<div style="left:1230px;top:316px;width:193px;height:29.5px;background:#63c2de;border-radius:4px"></div>
<div class="t" style="left:1239.50px;top:323px;font-size:13px;line-height:15px;color:#23282c;font-weight:400;letter-spacing:0.000px;">Podgląd zapisanych rekordów</div>
<div style="left:349px;top:361px;width:1px;height:249px;background:#dcdfe3;"></div>
<div style="left:349px;top:403px;width:1095px;height:207px;background:transparent;border:1px solid #dcdfe3;border-top:none;border-radius:0 0 4px 4px"></div>
<div style="left:349px;top:403px;width:1095px;height:1px;background:#dcdfe3;"></div>
<div style="left:349px;top:361px;width:243px;height:43px;background:#fff;border:1px solid #dcdfe3;border-bottom:none;border-radius:0 4px 0 0"></div>
<div style="left:349px;top:403px;width:1095px;height:1px;background:#dcdfe3;"></div>
<svg style="position:absolute;left:363px;top:371px;" width="23.5" height="23.0" viewBox="0 0 47 46"><path d="M23 2.2L44.8 10.6V33.2L23 43.8L2.2 33.2V10.6Z" fill="#23282c" stroke="#23282c" stroke-width="3.4" stroke-linejoin="round"/><path d="M5.3 12.4L23 5.6L41.4 12.4L23 20Z" fill="#fff"/><path d="M26.1 24.3L41.4 19.2V32.4L26.1 38.8Z" fill="#fff"/></svg>
<div class="t" style="left:396.10px;top:375px;font-size:13px;line-height:15px;color:#23282c;font-weight:400;letter-spacing:0.136px;">[dbo].[HelpSimpleModel]</div>
<div style="left:547px;top:368px;width:31px;height:30px;background:#f6f7f8;border-radius:4px;box-shadow:0 0 1px rgba(0,0,0,.06)"></div>
<svg style="position:absolute;left:558px;top:378px;" width="9" height="9" viewBox="0 0 9 9"><path d="M1 1L8 8M8 1L1 8" stroke="#23282c" stroke-width="2.4"/></svg>
<div class="t" style="left:375.40px;top:420px;font-size:13px;line-height:15px;color:#014d2f;font-weight:700;letter-spacing:-0.188px;">Lista pól</div>
<div class="t" style="left:452.90px;top:420px;font-size:13px;line-height:15px;color:#2a2f34;font-weight:400;letter-spacing:-0.039px;">Dokumenty biznesowe</div>
<div class="t" style="left:609.00px;top:420px;font-size:13px;line-height:15px;color:#2a2f34;font-weight:400;letter-spacing:-0.178px;">Formularze</div>
<div class="t" style="left:699.30px;top:420px;font-size:13px;line-height:15px;color:#2a2f34;font-weight:400;letter-spacing:-0.075px;">Listy</div>
<div class="t" style="left:750.30px;top:420px;font-size:13px;line-height:15px;color:#2a2f34;font-weight:400;letter-spacing:-0.289px;">Powiązania</div>
<div class="t" style="left:839.60px;top:420px;font-size:13px;line-height:15px;color:#2a2f34;font-weight:400;letter-spacing:0.680px;">Moduły</div>
<div style="left:363px;top:443px;width:1067px;height:159px;background:#fff;border:1px solid #e1e4e8"></div>
<div style="left:364px;top:444px;width:1065px;height:40px;background:#f7f8fa;"></div>
<div style="left:364px;top:484px;width:1065px;height:1px;background:#e1e4e8;"></div>
<div style="left:364px;top:485px;width:1065px;height:39px;background:#f7f8fa;"></div>
<div style="left:364px;top:524px;width:1065px;height:1px;background:#e1e4e8;"></div>
<div style="left:364px;top:525px;width:1048px;height:38px;background:#fff;"></div>
<div style="left:364px;top:563px;width:1065px;height:38px;background:#f2f2f2;"></div>
<div style="left:1412px;top:525px;width:17px;height:38px;background:#f1f1f1;"></div>
<div style="left:571px;top:485px;width:1px;height:116px;background:#e1e4e8;"></div>
<div style="left:831px;top:485px;width:1px;height:116px;background:#e1e4e8;"></div>
<div style="left:914px;top:485px;width:1px;height:116px;background:#e1e4e8;"></div>
<div style="left:997px;top:485px;width:1px;height:116px;background:#e1e4e8;"></div>
<div style="left:1080px;top:485px;width:1px;height:116px;background:#e1e4e8;"></div>
<div style="left:1287px;top:485px;width:1px;height:116px;background:#e1e4e8;"></div>
<div style="left:1412px;top:485px;width:1px;height:39px;background:#e1e4e8;"></div>
<div style="left:369px;top:449px;width:33px;height:31px;background:#014d2f;border-radius:4px"></div>
<div style="left:379px;top:458px;width:12.4px;height:12.2px;background:#fff;border-radius:1.5px"></div>
<div style="left:381.6px;top:463.1px;width:7.2px;height:2px;background:#014d2f;"></div>
<div style="left:384.2px;top:460.5px;width:2px;height:7.2px;background:#014d2f;"></div>
<div style="left:406px;top:449px;width:35px;height:31px;background:#ffc107;border-radius:4px"></div>
<svg style="position:absolute;left:417px;top:457.4px;" width="13.4" height="13.2" viewBox="0 0 13.4 13.2"><path d="M1.6 6.2A5.1 5.1 0 0 1 11.3 4.6" stroke="#23282c" stroke-width="1.7" fill="none"/><path d="M12.4 0.8V5.6H7.6" stroke="#23282c" stroke-width="1.7" fill="none" stroke-linejoin="miter"/><path d="M11.8 7A5.1 5.1 0 0 1 2.1 8.6" stroke="#23282c" stroke-width="1.7" fill="none"/><path d="M1 12.4V7.6H5.8" stroke="#23282c" stroke-width="1.7" fill="none"/></svg>
<div style="left:1265.4px;top:453.3px;width:38.4px;height:21.3px;background:#fff;border:1px solid #adb5bd;border-radius:11px"></div>
<div style="left:1267.8px;top:456px;width:16.6px;height:16.6px;border-radius:50%;background:#adb5bd"></div>
<div class="t" style="left:1309.50px;top:455px;font-size:11px;line-height:12px;color:#23282c;font-weight:400;letter-spacing:-0.195px;">Pokaż pola systemowe</div>
<div class="t" style="left:373.10px;top:497px;font-size:13px;line-height:15px;color:#23282c;font-weight:400;letter-spacing:-0.081px;">Nazwa pola danych</div>
<div class="t" style="left:582.40px;top:497px;font-size:13px;line-height:15px;color:#23282c;font-weight:400;letter-spacing:-0.222px;">Typ danych</div>
<div class="t" style="left:841.90px;top:497px;font-size:13px;line-height:15px;color:#23282c;font-weight:400;letter-spacing:-0.200px;">Wymaga...</div>
<div class="t" style="left:924.00px;top:497px;font-size:13px;line-height:15px;color:#23282c;font-weight:400;letter-spacing:-0.078px;">Dane wr...</div>
<div class="t" style="left:1007.90px;top:497px;font-size:13px;line-height:15px;color:#23282c;font-weight:400;letter-spacing:-0.389px;">Wyszuki...</div>
<div class="t" style="left:1089.20px;top:497px;font-size:13px;line-height:15px;color:#23282c;font-weight:400;letter-spacing:-0.024px;">Przypisany słownik</div>
<div class="t" style="left:1298.40px;top:497px;font-size:13px;line-height:15px;color:#23282c;font-weight:400;letter-spacing:-0.325px;">Opcje</div>
<div class="t" style="left:373.10px;top:536px;font-size:13px;line-height:15px;color:#23282c;font-weight:400;letter-spacing:-0.214px;">ParentId</div>
<div class="t" style="left:581.40px;top:536px;font-size:13px;line-height:15px;color:#23282c;font-weight:400;letter-spacing:-0.087px;">Liczby całkowite</div>
<div class="t" style="left:373.10px;top:574px;font-size:13px;line-height:15px;color:#23282c;font-weight:400;letter-spacing:-0.157px;">StatusId</div>
<div class="t" style="left:581.40px;top:574px;font-size:13px;line-height:15px;color:#23282c;font-weight:400;letter-spacing:-0.087px;">Liczby całkowite</div>
<div style="left:842.5px;top:535.5px;width:12.5px;height:12.5px;background:#f7f7f7;border:1px solid #cfd2d6;border-radius:2px"></div>
<div style="left:925.5px;top:535.5px;width:12.5px;height:12.5px;background:#f7f7f7;border:1px solid #cfd2d6;border-radius:2px"></div>
<div style="left:1008.5px;top:535.5px;width:12.5px;height:12.5px;background:#f7f7f7;border:1px solid #cfd2d6;border-radius:2px"></div>
<div style="left:842.5px;top:573.5px;width:12.5px;height:12.5px;background:#f7f7f7;border:1px solid #cfd2d6;border-radius:2px"></div>
<div style="left:925.5px;top:573.5px;width:12.5px;height:12.5px;background:#f7f7f7;border:1px solid #cfd2d6;border-radius:2px"></div>
<div style="left:1008.5px;top:573.5px;width:12.5px;height:12.5px;background:#f7f7f7;border:1px solid #cfd2d6;border-radius:2px"></div>
<div style="left:1300px;top:528px;width:31px;height:31px;background:#014d2f;border-radius:3px"></div>
<svg style="position:absolute;left:1307.7px;top:536.7px;" width="15.5" height="14.6" viewBox="0 0 15.5 14.6"><path d="M11.6 1.2L14.3 3.9L5 13.2L1.3 14L2.1 10.3Z" fill="#fff"/><path d="M10.2 2.6L12.9 5.3" stroke="#014d2f" stroke-width="0.8"/></svg>
<div style="left:1335px;top:528px;width:30px;height:31px;background:#c8ced3;border-radius:3px"></div>
<svg style="position:absolute;left:1343.8px;top:536.7px;" width="11.3" height="14.3" viewBox="0 0 11.3 14.3"><path d="M0 2.2H11.3M3.8 2.2V0.9H7.5V2.2" stroke="#23282c" stroke-width="1.4" fill="none"/><path d="M1.6 3.5L2.2 13.5H9.1L9.7 3.5" stroke="#23282c" stroke-width="1.4" fill="none"/><path d="M4.3 5V12M7 5V12" stroke="#23282c" stroke-width="1.1"/></svg>
<div style="left:1367px;top:528px;width:35px;height:31px;background:#63c2de;border-radius:3px"></div>
<svg style="position:absolute;left:1378px;top:536.7px;" width="13" height="13" viewBox="0 0 13 13"><circle cx="6.5" cy="6.5" r="6.5" fill="#23282c"/><rect x="5.6" y="5.3" width="1.9" height="4.8" fill="#63c2de"/><rect x="4.8" y="9.3" width="3.5" height="1.2" fill="#63c2de"/><rect x="4.8" y="5.3" width="2.5" height="1.1" fill="#63c2de"/><circle cx="6.5" cy="3.4" r="1.1" fill="#63c2de"/></svg>
<div style="left:1300px;top:566px;width:31px;height:31px;background:#014d2f;border-radius:3px"></div>
<svg style="position:absolute;left:1307.7px;top:574.7px;" width="15.5" height="14.6" viewBox="0 0 15.5 14.6"><path d="M11.6 1.2L14.3 3.9L5 13.2L1.3 14L2.1 10.3Z" fill="#fff"/><path d="M10.2 2.6L12.9 5.3" stroke="#014d2f" stroke-width="0.8"/></svg>
<div style="left:1335px;top:566px;width:30px;height:31px;background:#c8ced3;border-radius:3px"></div>
<svg style="position:absolute;left:1343.8px;top:574.7px;" width="11.3" height="14.3" viewBox="0 0 11.3 14.3"><path d="M0 2.2H11.3M3.8 2.2V0.9H7.5V2.2" stroke="#23282c" stroke-width="1.4" fill="none"/><path d="M1.6 3.5L2.2 13.5H9.1L9.7 3.5" stroke="#23282c" stroke-width="1.4" fill="none"/><path d="M4.3 5V12M7 5V12" stroke="#23282c" stroke-width="1.1"/></svg>
<div style="left:1367px;top:566px;width:35px;height:31px;background:#63c2de;border-radius:3px"></div>
<svg style="position:absolute;left:1378px;top:574.7px;" width="13" height="13" viewBox="0 0 13 13"><circle cx="6.5" cy="6.5" r="6.5" fill="#23282c"/><rect x="5.6" y="5.3" width="1.9" height="4.8" fill="#63c2de"/><rect x="4.8" y="9.3" width="3.5" height="1.2" fill="#63c2de"/><rect x="4.8" y="5.3" width="2.5" height="1.1" fill="#63c2de"/><circle cx="6.5" cy="3.4" r="1.1" fill="#63c2de"/></svg>
<svg style="position:absolute;left:1416.8px;top:531.9px;" width="7.5" height="4.4" viewBox="0 0 7.5 4.4"><path d="M0 4.4H7.5L3.75 0Z" fill="#a3a3a3"/></svg>
<svg style="position:absolute;left:1416.8px;top:589.9px;" width="7.5" height="4.4" viewBox="0 0 7.5 4.4"><path d="M0 0H7.5L3.75 4.4Z" fill="#a3a3a3"/></svg>
<div style="left:0px;top:658px;width:79px;height:1px;background:#9a9a9a;"></div>
<div style="left:79px;top:658px;width:334px;height:1px;background:#6b8f77;"></div>
<div style="left:413px;top:658px;width:1063px;height:1px;background:#a9aaab;"></div>
<div style="left:0px;top:0px;width:1px;height:659px;background:#a6a6a6;"></div>
<div style="left:0px;top:265px;width:1px;height:36px;background:#2d5a45;"></div>
<div style="left:1475px;top:0px;width:1px;height:659px;background:#9c9c9c;"></div>
<div style="left:1475px;top:0px;width:1px;height:16px;background:#3a7bd5;"></div>
</body></html>
